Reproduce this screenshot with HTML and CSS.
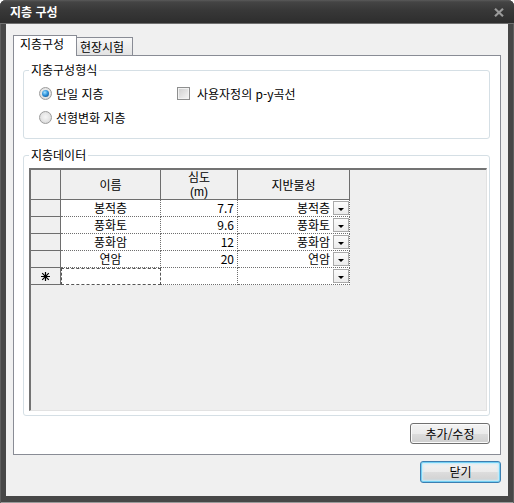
FILE: index.html
```html
<!DOCTYPE html>
<html lang="ko">
<head>
<meta charset="utf-8">
<title>지층 구성</title>
<link rel="stylesheet" href="styles.css">
</head>
<body>
<div class="window">
  <div class="titlebar">
    <span class="title">지층 구성</span>
    <svg class="close" width="10" height="9" viewBox="0 0 10 9"><path d="M1 0.8 L9 8.2 M9 0.8 L1 8.2" stroke="#9a9a9a" stroke-width="2.2"/></svg>
  </div>
  <div class="client">
    <div class="tabs">
      <div class="tab active">지층구성</div>
      <div class="tab">현장시험</div>
    </div>
    <div class="panel">
      <div class="group g1">
        <div class="legend">지층구성형식</div>
        <div class="g1-body">
          <div class="col">
            <div class="opt"><span class="radio checked"></span><span>단일 지층</span></div>
            <div class="opt"><span class="radio"></span><span>선형변화 지층</span></div>
          </div>
          <div class="opt chk"><span class="check"></span><span>사용자정의 p-y곡선</span></div>
        </div>
      </div>
      <div class="group g2">
        <div class="legend">지층데이터</div>
        <div class="grid">
          <div class="tbl">
            <div class="hc"></div>
            <div class="hc">이름</div>
            <div class="hc two"><span class="l1">심도</span><span class="l2">(m)</span></div>
            <div class="hc">지반물성</div>

            <div class="rh"></div>
            <div class="c name">봉적층</div>
            <div class="c num">7.7</div>
            <div class="c soil"><span>봉적층</span><span class="dd"></span></div>

            <div class="rh"></div>
            <div class="c name">풍화토</div>
            <div class="c num">9.6</div>
            <div class="c soil"><span>풍화토</span><span class="dd"></span></div>

            <div class="rh"></div>
            <div class="c name">풍화암</div>
            <div class="c num">12</div>
            <div class="c soil"><span>풍화암</span><span class="dd"></span></div>

            <div class="rh"></div>
            <div class="c name">연암</div>
            <div class="c num">20</div>
            <div class="c soil"><span>연암</span><span class="dd"></span></div>

            <div class="rh star"><svg width="9" height="9" viewBox="0 0 9 9"><path d="M4.5 0V9M0 4.5H9M1.2 1.2L7.8 7.8M7.8 1.2L1.2 7.8" stroke="#000" stroke-width="1.2"/></svg></div>
            <div class="c name focus"></div>
            <div class="c num"></div>
            <div class="c soil"><span class="dd"></span></div>
          </div>
        </div>
      </div>
      <div class="panel-actions">
        <button class="btn">추가/수정</button>
      </div>
    </div>
    <div class="actions">
      <button class="btn default">닫기</button>
    </div>
  </div>
</div>
</body>
</html>
```

FILE: styles.css
```css
* { box-sizing: border-box; }
html, body { margin: 0; padding: 0; background: #fff; }
body {
  font-family: "Noto Sans CJK KR", "Noto Sans", sans-serif;
  font-size: 12px;
  color: #000;
}

.window {
  width: 514px;
  height: 503px;
  background: #474747;
  border-radius: 6px 6px 0 0;
  display: flex;
  flex-direction: column;
  box-shadow: inset 1px 0 0 #5e5e5e, inset -1px 0 0 #5e5e5e, inset 0 -1px 0 #9a9a9a;
}

.titlebar {
  height: 24px;
  flex: none;
  display: flex;
  align-items: center;
  justify-content: space-between;
  padding: 1px 10px 0 10px;
  border-radius: 6px 6px 0 0;
  background: linear-gradient(#5a5a5a 0, #444 2px, #383838 10px, #2e2e2e 22px);
  border-bottom: 1px solid #707070;
}
.title {
  color: #fff;
  font-weight: bold;
  font-size: 12px;
  line-height: 14px;
}
.close { display: block; }

.client {
  flex: 1;
  margin: 0 6px 7px 6px;
  background: #f0f0f0;
  padding: 11px 7px 0 7px;
  display: flex;
  flex-direction: column;
}

.tabs {
  display: flex;
  align-items: flex-end;
  height: 20px;
}
.tab {
  height: 18px;
  width: 56px;
  border: 1px solid #898c95;
  border-bottom: none;
  border-left: none;
  background: linear-gradient(#f7f7f7, #e3e3e3);
  line-height: 17px;
  padding-left: 3px;
  white-space: nowrap;
}
.tab.active {
  width: 64px;
  height: 21px;
  margin-bottom: -1px;
  border-left: 1px solid #898c95;
  background: #fff;
  position: relative;
  z-index: 1;
  line-height: 16px;
  padding-left: 6px;
}

.panel {
  height: 400px;
  border: 1px solid #898c95;
  background: #fff;
  padding: 14px 10px 0 9px;
  display: flex;
  flex-direction: column;
}

.group {
  border: 1px solid #d5dfe5;
  border-radius: 3px;
}
.g1 { height: 69px; }
.g2 {
  height: 261px;
  margin-top: 16px;
}
.legend {
  width: fit-content;
  height: 15px;
  line-height: 15px;
  margin: -9px 0 0 5px;
  padding: 0 2px;
  background: #fff;
}

.g1-body {
  display: flex;
  padding: 4px 0 0 15px;
}
.col { width: 138px; }
.opt {
  display: flex;
  align-items: center;
  height: 24px;
  gap: 4px;
  white-space: nowrap;
}
.opt.chk { gap: 7px; }

.radio {
  flex: none;
  width: 13px;
  height: 13px;
  border-radius: 50%;
  border: 1px solid #9c9c9c;
  background: radial-gradient(circle at 50% 45%, #f6f6f6 0, #e4e4e4 55%, #cdcdcd 100%);
  position: relative;
}
.radio.checked::after {
  content: "";
  position: absolute;
  left: 2px;
  top: 2px;
  width: 7px;
  height: 7px;
  border-radius: 50%;
  background: radial-gradient(circle at 40% 35%, #a6e2ff 0, #2f94dc 45%, #0b3f7a 100%);
}
.check {
  flex: none;
  width: 13px;
  height: 13px;
  border: 1px solid #8e8f8f;
  background: linear-gradient(135deg, #cdcdcd, #f6f6f6);
  box-shadow: inset 0 0 0 1px #f2f2f2;
}

.grid {
  height: 243px;
  margin: 6px 2px 0 5px;
  border-style: solid;
  border-width: 2px 1px 1px 2px;
  border-color: #737373 #e2e2e2 #e2e2e2 #737373;
  background: #efefef;
}
.tbl {
  display: grid;
  grid-template-columns: 30px 100px 77px 112px;
  grid-template-rows: 30px repeat(5, 17px);
  width: 319px;
}
.hc {
  background: #f0f0f0;
  border-right: 1px solid #6e6e6e;
  border-bottom: 1px solid #6e6e6e;
  display: flex;
  align-items: center;
  justify-content: center;
  text-align: center;
  line-height: 13px;
}
.hc.two {
  flex-direction: column;
  justify-content: flex-start;
  line-height: normal;
}
.hc.two .l1 {
  display: block;
  margin-top: -2px;
}
.hc.two .l2 {
  display: block;
  font-family: "Liberation Sans", Arial, sans-serif;
  font-size: 12px;
}
.rh {
  background: #f0f0f0;
  border-right: 1px solid #6e6e6e;
  border-bottom: 1px solid #6e6e6e;
}
.rh.star {
  display: flex;
  align-items: center;
  justify-content: center;
}
.c {
  background: #fff;
  border-right: 1px dotted #6e6e6e;
  border-bottom: 1px dotted #6e6e6e;
  line-height: 16px;
  white-space: nowrap;
}
.name { text-align: center; }
.num { text-align: right; padding-right: 3px; }
.soil {
  display: flex;
  justify-content: flex-end;
  align-items: center;
  gap: 3px;
}
.dd {
  width: 16px;
  height: 14px;
  border: 1px solid #a9a9a9;
  background: linear-gradient(#fbfbfb, #ececec);
  display: flex;
  align-items: center;
  justify-content: center;
  padding-top: 2px;
}
.dd::before {
  content: "";
  width: 0;
  height: 0;
  border-left: 3px solid transparent;
  border-right: 3px solid transparent;
  border-top: 3px solid #000;
}
.focus {
  border: 1px dashed #555;
}

.panel-actions {
  display: flex;
  justify-content: flex-end;
  margin-top: 7px;
}
.btn {
  width: 80px;
  height: 21px;
  padding: 0;
  border: 1px solid #707070;
  border-radius: 3px;
  background: linear-gradient(#f3f3f3 0, #ebebeb 50%, #dddddd 51%, #cfcfcf 100%);
  box-shadow: inset 0 0 0 1px #fbfbfb;
  font-family: "Noto Sans CJK KR", "Noto Sans", sans-serif;
  font-size: 12px;
  line-height: 18px;
  color: #000;
}
.actions {
  display: flex;
  justify-content: flex-end;
  margin-top: 6px;
}
.btn.default {
  width: 81px;
  height: 22px;
  border-color: #3c7fb1;
  box-shadow: inset 0 0 0 1px #74d0f4, inset 0 0 2px 2px #c4ecfb;
}
```
